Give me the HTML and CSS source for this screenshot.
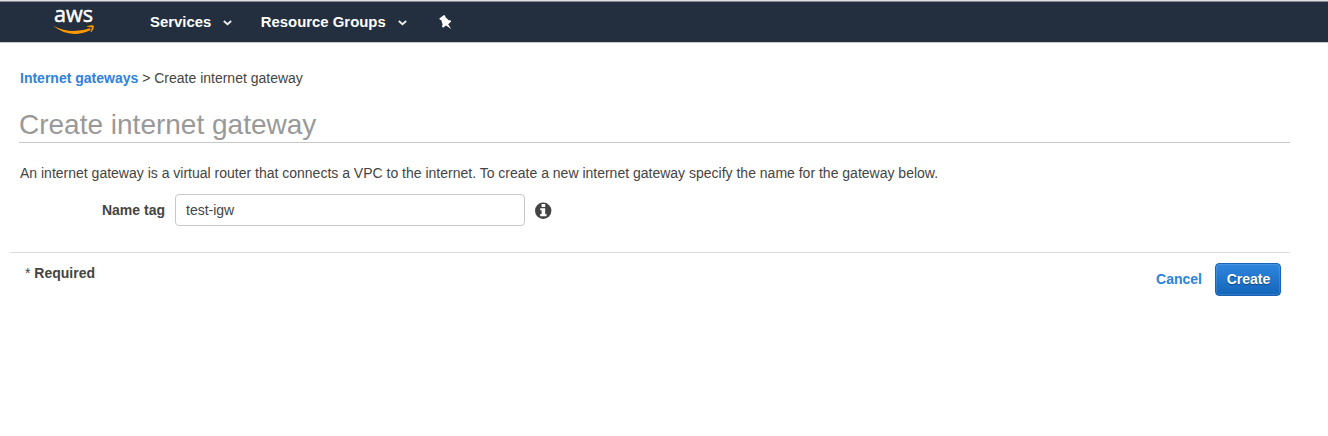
FILE: index.html
```
<!DOCTYPE html>
<html lang="en">
<head>
<meta charset="utf-8">
<title>Create internet gateway</title>
<link rel="stylesheet" href="styles.css">
</head>
<body>
<header class="topbar">
  <svg class="logo" width="44" height="36" viewBox="0 -6 44 36">
    <text class="logo-text" x="1" y="16.2" textLength="39" lengthAdjust="spacingAndGlyphs">aws</text>
    <path d="M0 19.8Q18 29 36.8 22.2L37.8 23.9Q17 33.6 0 19.8Z" fill="#f90"/>
    <path d="M34.2 20.5Q39.2 18.9 40.5 19.9Q40.9 22.6 38 26L39.4 21Z" fill="#f90" stroke="#f90" stroke-width=".7"/>
  </svg>
  <nav class="menu">
    <a class="menu-item services">Services<svg class="chevron" width="9" height="6" viewBox="0 0 9 6"><path d="M.8 1L4.5 4.2L8.2 1"/></svg></a>
    <a class="menu-item">Resource Groups<svg class="chevron" width="9" height="6" viewBox="0 0 9 6"><path d="M.8 1L4.5 4.2L8.2 1"/></svg></a>
    <svg class="pin" width="13" height="15" viewBox="0 0 13 15"><path d="M5.1 0L6.4.9L6.3 2L9.7 5.2L11.4 5.3L12.2 6.5L9.2 9.3L12.2 14L7 10.5L4 12.7L3 11.5L3.6 9.4L2.2 5.1L.9 4.7L.3 3.4Z"/></svg>
  </nav>
</header>
<main class="page">
  <div class="breadcrumb"><a class="link">Internet gateways</a> &gt; Create internet gateway</div>
  <h1 class="title">Create internet gateway</h1>
  <p class="intro">An internet gateway is a virtual router that connects a VPC to the internet. To create a new internet gateway specify the name for the gateway below.</p>
  <div class="field">
    <label class="label" for="name">Name tag</label>
    <input class="input" id="name" type="text" value="test-igw">
    <svg class="info" width="17" height="17" viewBox="0 0 17 17"><circle cx="8.2" cy="8.7" r="8.2" fill="#444"/><path d="M6.6 2h3.6v3H6.6zM5.2 6.2h5v5.8h1.3v2.2H5.2V12h1.4V8.3H5.2z" fill="#fff"/></svg>
  </div>
  <footer class="footer">
    <div class="required">* <b>Required</b></div>
    <div class="actions"><a class="link cancel">Cancel</a><button class="create">Create</button></div>
  </footer>
</main>
</body>
</html>
```
FILE: styles.css
```
* { box-sizing: border-box; }
body {
  margin: 0;
  background: #fff;
  color: #444;
  font: 14px/20px "Liberation Sans", Arial, sans-serif;
}
.topbar {
  display: flex;
  height: 43px;
  padding-left: 53px;
  background: #232f3e;
  border-top: 1px solid #dedede;
  border-bottom: 1px solid #c8c8cc;
  box-shadow: inset 0 1px #858c95;
}
.logo { margin-top: -1px; overflow: visible; }
.logo-text { font: 22px "Open Sans", sans-serif; fill: #fff; stroke: #fff; stroke-width: .5px; }
.menu {
  display: flex;
  align-items: center;
  height: 41px;
  margin-left: 53px;
  color: #fff;
  font-size: 14.9px;
  font-weight: bold;
}
.menu-item { display: flex; align-items: center; margin-right: 32px; }
.services { margin-right: 28.5px; }
.chevron { margin: 3px 0 0 12px; fill: none; stroke: #eee; stroke-width: 1.8; }
.pin { margin-top: 1px; fill: #fff; }
.page { padding: 25px 38px 0 10px; }
.breadcrumb { padding-left: 10px; }
.link { color: #2e82da; font-weight: bold; }
.title {
  height: 40px;
  margin: 15px 0 0 9px;
  padding-top: 6px;
  border-bottom: 1px solid #c8c8c8;
  color: #999;
  font-size: 28px;
  line-height: 32px;
  font-weight: normal;
}
.intro { margin: 20px 0 11px 10px; }
.field { display: flex; align-items: center; height: 32px; }
.label { width: 155px; text-align: right; font-weight: bold; }
.input {
  width: 350px;
  height: 32px;
  margin: 0 10px;
  padding: 0 10px;
  border: 1px solid #c8c8c8;
  border-radius: 4px;
  background: #fff;
  color: #444;
  font: inherit;
}
.info { overflow: visible; }
.footer {
  display: flex;
  justify-content: space-between;
  margin-top: 26px;
  padding: 10px 9px 0 15px;
  border-top: 1px solid #ddd;
}
.actions { display: flex; align-items: center; gap: 13px; }
.cancel { margin-bottom: 2px; }
.create {
  width: 66px;
  height: 33px;
  padding: 0 0 2px 1px;
  border: 1px solid #1763b5;
  border-radius: 4px;
  background: linear-gradient(#2f86de, #1365b8);
  box-shadow: inset 0 0 0 1px rgba(255, 255, 255, .12);
  color: #fff;
  font: bold 14px/20px "Liberation Sans", Arial, sans-serif;
  text-shadow: 0 1px 1px #0b4684;
}
```
